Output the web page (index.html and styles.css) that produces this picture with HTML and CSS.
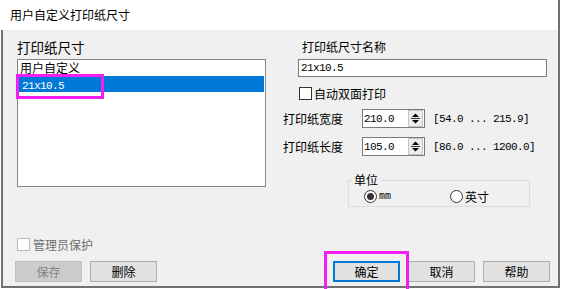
FILE: index.html
```html
<!DOCTYPE html>
<html lang="zh-CN">

<head>
    <meta charset="UTF-8" />
    <title>用户自定义打印纸尺寸</title>
    <link rel="stylesheet" href="styles.css">
</head>

<body>
    <div class="dialog">
        <div class="titlebar">用户自定义打印纸尺寸</div>

        <div class="client">
            <div class="main">
                <!-- 左側：用紙リスト -->
                <div class="left">
                    <div class="caption big">打印纸尺寸</div>
                    <div class="listbox">
                        <div class="item">用户自定义</div>
                        <div class="item selected"><span class="mono">21x10.5</span><span class="mark list-mark"></span></div>
                    </div>
                </div>

                <!-- 右側：設定 -->
                <div class="right">
                    <div class="caption name-cap">打印纸尺寸名称</div>
                    <div class="textbox mono">21x10.5</div>

                    <label class="check duplex"><span class="box"></span>自动双面打印</label>

                    <div class="field-row">
                        <span class="field-label">打印纸宽度</span>
                        <div class="spin">
                            <span class="val mono">210.0</span>
                            <svg class="arrows" width="15" height="17" viewBox="0 0 15 17">
                                <rect x="0.5" y="0.5" width="14" height="16" fill="#ececec" stroke="#c4c4c4" />
                                <line x1="3" y1="8.5" x2="12" y2="8.5" stroke="#333" />
                                <path d="M4 7 L7.5 3.5 L11 7 Z" fill="#000" />
                                <path d="M4 10 L7.5 13.5 L11 10 Z" fill="#000" />
                            </svg>
                        </div>
                        <span class="range mono">[54.0 ... 215.9]</span>
                    </div>

                    <div class="field-row second">
                        <span class="field-label">打印纸长度</span>
                        <div class="spin">
                            <span class="val mono">105.0</span>
                            <svg class="arrows" width="15" height="17" viewBox="0 0 15 17">
                                <rect x="0.5" y="0.5" width="14" height="16" fill="#ececec" stroke="#c4c4c4" />
                                <line x1="3" y1="8.5" x2="12" y2="8.5" stroke="#333" />
                                <path d="M4 7 L7.5 3.5 L11 7 Z" fill="#000" />
                                <path d="M4 10 L7.5 13.5 L11 10 Z" fill="#000" />
                            </svg>
                        </div>
                        <span class="range mono">[86.0 ... 1200.0]</span>
                    </div>

                    <fieldset class="unit">
                        <legend>单位</legend>
                        <div class="radios">
                            <label class="radio first"><span class="dot on"></span><span class="mm">mm</span></label>
                            <label class="radio"><span class="dot"></span>英寸</label>
                        </div>
                    </fieldset>
                </div>
            </div>

            <label class="check admin"><span class="box"></span>管理员保护</label>

            <div class="buttons">
                <button class="btn" disabled>保存</button>
                <button class="btn">删除</button>
                <button class="btn default push">确定<span class="mark ok-mark"></span></button>
                <button class="btn">取消</button>
                <button class="btn">帮助</button>
            </div>
        </div>
    </div>
</body>

</html>
```

FILE: styles.css
```css
body {
    margin: 0;
    background: #fff;
    font-family: "Noto Sans CJK SC", sans-serif;
    font-size: 12px;
    color: #000;
}

.dialog {
    width: 560px;
    height: 289px;
    overflow: hidden;
}

.titlebar {
    height: 30px;
    line-height: 30px;
    padding-left: 10px;
    box-sizing: border-box;
    background: #fff;
    border-right: 2px solid #707070;
}

.client {
    position: relative;
    margin-left: 1px;
    height: 258px;
    box-sizing: border-box;
    background: #f0f0f0;
    border-left: 2px solid #707070;
    border-right: 2px solid #707070;
    border-bottom: 2px solid #707070;
    padding-bottom: 4px;
    display: flex;
    flex-direction: column;
}

.mono {
    font-family: "Liberation Mono", monospace;
    font-size: 11px;
    letter-spacing: -0.6px;
}

.main {
    display: flex;
    padding: 9px 0 0 14px;
}

.left {
    width: 249px;
    flex-shrink: 0;
}

.caption {
    height: 16px;
    line-height: 16px;
    margin-bottom: 4px;
}

.caption.big {
    font-size: 13.5px;
}

.listbox {
    height: 128px;
    box-sizing: border-box;
    border: 1px solid #828790;
    background: #fff;
    padding-right: 1px;
}

.item {
    height: 16px;
    line-height: 16px;
    padding-left: 2px;
}

.item.selected {
    position: relative;
    background: #0078d7;
    color: #fff;
    padding-left: 4px;
}

.mark {
    position: absolute;
    box-sizing: border-box;
    border: 3px solid #f21ef2;
    z-index: 2;
}

.list-mark {
    left: -2px;
    top: -2px;
    width: 88px;
    height: 25px;
}

.right {
    margin-left: 17px;
    width: 264px;
}

.name-cap {
    padding-left: 19px;
}

.textbox {
    margin-left: 15px;
    width: 249px;
    height: 18px;
    line-height: 16px;
    box-sizing: border-box;
    border: 1px solid #7a7a7a;
    background: #fff;
    padding-left: 2px;
}

.check {
    display: flex;
    align-items: center;
    height: 16px;
}

.check .box {
    width: 13px;
    height: 13px;
    box-sizing: border-box;
    border: 1px solid #333;
    background: #fff;
    margin-right: 2px;
}

.duplex {
    margin-top: 8px;
    padding-left: 16px;
}

.field-row {
    display: flex;
    align-items: center;
    margin-top: 8px;
    height: 19px;
}

.field-row.second {
    margin-top: 9px;
}

.field-label {
    width: 79px;
}

.spin {
    display: flex;
    align-items: center;
    width: 63px;
    height: 19px;
    box-sizing: border-box;
    border: 1px solid #7a7a7a;
    background: #fff;
}

.spin .val {
    flex: 1;
    padding-left: 1px;
}

.spin .arrows {
    margin-right: 1px;
}

.range {
    margin-left: 8px;
}

.unit {
    margin: 17px 0 0 65px;
    width: 182px;
    box-sizing: border-box;
    padding: 0 0 2px 0;
    border: 1px solid #dcdcdc;
}

.unit legend {
    margin-left: 3px;
    padding: 0 2px;
    line-height: 14px;
    height: 14px;
}

.radios {
    display: flex;
    align-items: center;
    height: 15px;
    margin-top: 2px;
    padding-left: 15px;
}

.radio {
    display: flex;
    align-items: center;
}

.radio.first {
    width: 86px;
}

.dot {
    width: 13px;
    height: 13px;
    box-sizing: border-box;
    border: 1px solid #333;
    border-radius: 50%;
    background: #fff;
    margin-right: 2px;
    display: flex;
    align-items: center;
    justify-content: center;
}

.dot.on::after {
    content: "";
    width: 7px;
    height: 7px;
    border-radius: 50%;
    background: #333;
}

.mm {
    font-family: "Liberation Mono", monospace;
    font-size: 10px;
}

.admin {
    margin-top: auto;
    margin-bottom: 9px;
    padding-left: 14px;
    color: #6d6d6d;
}

.admin .box {
    border-color: #bcbcbc;
    margin-right: 3px;
}

.buttons {
    display: flex;
    padding: 0 8px 0 12px;
    gap: 8px;
}

.btn {
    position: relative;
    width: 67px;
    height: 21px;
    box-sizing: border-box;
    padding: 0;
    border: 1px solid #adadad;
    background: #e1e1e1;
    font-family: "Noto Sans CJK SC", sans-serif;
    font-size: 12px;
    color: #000;
}

.btn:disabled {
    background: #cccccc;
    border-color: #bfbfbf;
    color: #838383;
}

.btn.default {
    border: 2px solid #0078d7;
}

.push {
    margin-left: auto;
}

.ok-mark {
    left: -11px;
    top: -12px;
    width: 85px;
    height: 42px;
}
```
